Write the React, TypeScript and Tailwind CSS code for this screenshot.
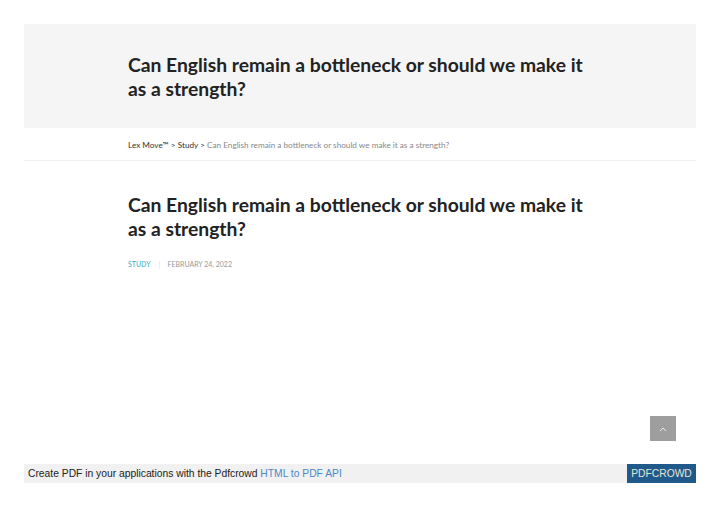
export default function App() {
  return (
    <div className="w-[720px] h-[509px] bg-white pt-6 px-6 relative" style={{ fontFamily: 'Lato, "Open Sans", sans-serif' }}>
      <header className="bg-[#f5f5f5] h-[104px] pl-[104px] pt-[29px]">
        <h1 className="text-[19.3px] leading-[23.5px] font-bold text-[#222] w-[462px]">
          Can English remain a bottleneck or should we make it as a strength?
        </h1>
      </header>
      <nav className="h-[33px] border-b border-[#f0f0f0] pl-[104px] pt-[12px] text-[8.2px] leading-[11px]">
        <span className="text-[#333]">Lex Move™</span>
        <span className="text-[#333]"> &gt; </span>
        <span className="text-[#333]">Study</span>
        <span className="text-[#333]"> &gt; </span>
        <span className="text-[#888]">Can English remain a bottleneck or should we make it as a strength?</span>
      </nav>
      <article className="pl-[104px] pt-[32px]">
        <h2 className="text-[19.3px] leading-[23.5px] font-bold text-[#222] w-[462px]">
          Can English remain a bottleneck or should we make it as a strength?
        </h2>
        <div className="flex items-center mt-[20px] text-[7px] leading-[9px] uppercase">
          <span className="text-[#3fa9c4]">Study</span>
          <span className="w-px h-[8px] bg-[#eee] mx-[8px]"></span>
          <span className="text-[#999]">February 24, 2022</span>
        </div>
      </article>
      <button className="absolute left-[650px] top-[416px] w-[26px] h-[25px] bg-[#9e9e9e] flex items-center justify-center">
        <svg width="6" height="4" viewBox="0 0 6 4"><path d="M0 4 L3 1 L6 4" fill="none" stroke="#e8e8e8" strokeWidth="1" /></svg>
      </button>
      <footer className="absolute left-[24px] top-[464px] w-[672px] h-[19px] flex" style={{ fontFamily: '"Liberation Sans", Arial, sans-serif' }}>
        <div className="flex-1 bg-[#f1f1f1] pl-[4px] text-[10.3px] leading-[19px] text-[#222]">
          Create PDF in your applications with the Pdfcrowd <span className="text-[#4a88c8]">HTML to PDF API</span>
        </div>
        <div className="w-[69px] bg-[#1f5a8a] text-[#e6e6d6] text-[10.3px] leading-[19px] text-center">PDFCROWD</div>
      </footer>
    </div>
  )
}
